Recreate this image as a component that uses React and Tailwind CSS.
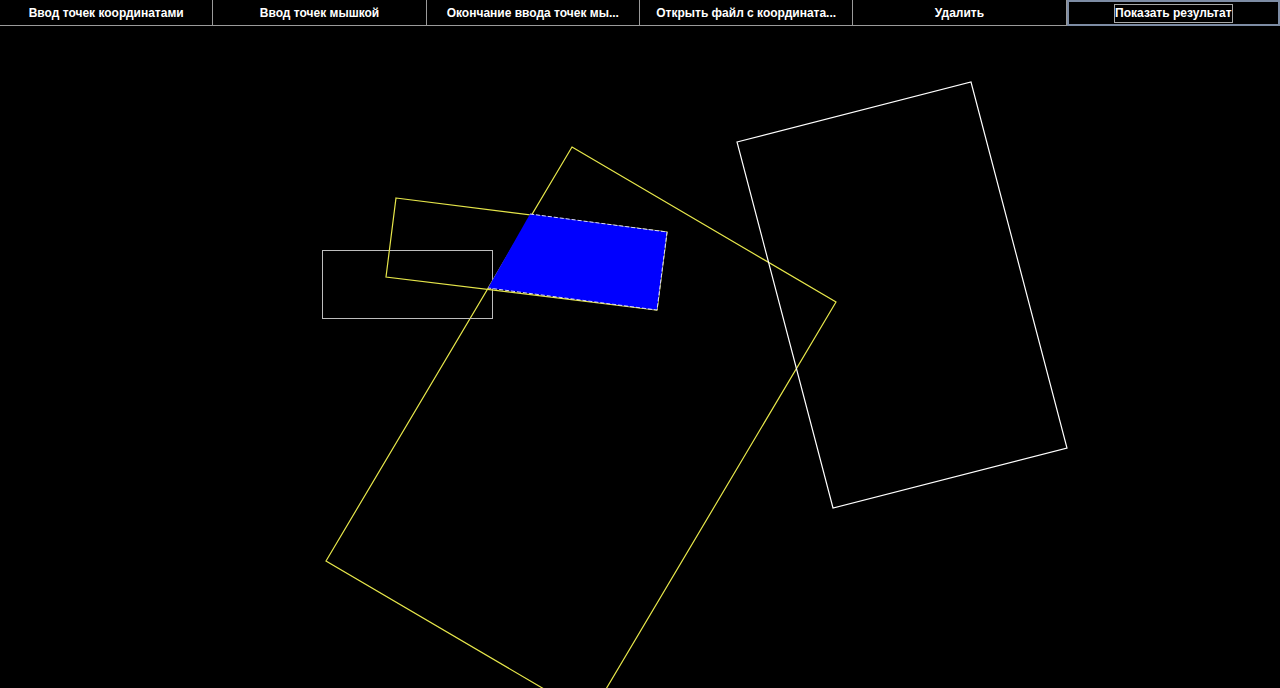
const buttons = [
  "Ввод точек координатами",
  "Ввод точек мышкой",
  "Окончание ввода точек мы...",
  "Открыть файл с координата...",
  "Удалить",
  "Показать результат",
];

function Toolbar() {
  return (
    <div className="grid grid-cols-6 h-[26px] bg-black">
      {buttons.map((label, i) => {
        const active = i === buttons.length - 1;
        return (
          <button
            key={label}
            className={`min-w-0 flex items-center justify-center pt-[1px] text-white font-bold text-[12px] ${
              active
                ? "border-2 border-[#7d8ca4]"
                : "border-b border-r border-[#9a9a9a]"
            }`}
          >
            {active ? (
              <span className="border border-[#a8a8a8] leading-[17px]">{label}</span>
            ) : (
              label
            )}
          </button>
        );
      })}
    </div>
  );
}

export default function App() {
  return (
    <div
      className="w-[1280px] h-[688px] bg-black overflow-hidden"
      style={{ fontFamily: '"Liberation Sans", Arial, sans-serif' }}
    >
      <Toolbar />
      <svg width="1280" height="662" viewBox="0 26 1280 662" className="block">
        <polygon
          points="572,147 836,302 590,716 326,561"
          fill="none"
          stroke="#e6e64a"
          strokeWidth="1.2"
        />
        <rect x="322.5" y="250.5" width="170" height="68" fill="none" stroke="#bdbdbd" strokeWidth="1" />
        <polygon
          points="396,198 667,232 657,310 386,277"
          fill="none"
          stroke="#e6e64a"
          strokeWidth="1.2"
        />
        <polygon points="530,214 667,232 657,310 488,288" fill="#0000ff" />
        <polyline
          points="530,214 667,232 657,310 488,288"
          fill="none"
          stroke="#d8d8ff"
          strokeWidth="1"
          strokeDasharray="4 2"
        />
        <polygon
          points="737,142 971,82 1067,448 833,508"
          fill="none"
          stroke="#ffffff"
          strokeWidth="1.2"
        />
      </svg>
    </div>
  );
}
